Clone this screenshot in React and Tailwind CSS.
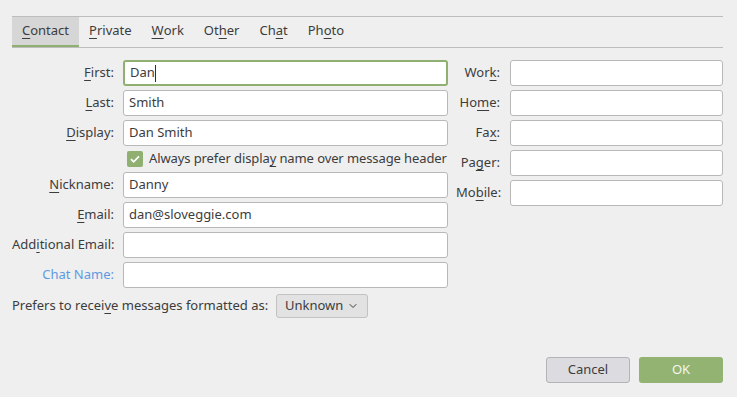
import { ChevronDown } from "lucide-react";

function Mn({ children }) {
  return <span className="underline decoration-1 underline-offset-[3px]">{children}</span>;
}

function Field({ value, focused }) {
  return (
    <div
      className={
        "h-[26px] rounded-[3px] bg-white flex items-center px-[5px] " +
        (focused ? "border-2 border-[#8fb070] px-[4px]" : "border border-[#b8b8b8]")
      }
    >
      <span>{value}</span>
      {focused && <span className="w-px h-[17px] bg-[#2e2e2e]" />}
    </div>
  );
}

const tabs = [
  ["C", "ontact"],
  ["P", "rivate"],
  ["W", "ork"],
  ["Ot", "h", "er"],
  ["Ch", "a", "t"],
  ["Ph", "o", "to"],
];

function Tab({ parts, active }) {
  const label =
    parts.length === 2 ? (
      <>
        <Mn>{parts[0]}</Mn>
        {parts[1]}
      </>
    ) : (
      <>
        {parts[0]}
        <Mn>{parts[1]}</Mn>
        {parts[2]}
      </>
    );
  return (
    <div
      className={
        "h-full px-[10px] flex items-center border-b-2 " +
        (active ? "bg-[#d6d6d6] border-[#8fb070]" : "border-transparent")
      }
    >
      {label}
    </div>
  );
}

export default function App() {
  return (
    <div
      className="w-[737px] h-[397px] bg-[#efefef] text-[#3c3c3c] text-[13px] pl-3 pr-[14px] pt-4 flex flex-col"
      style={{ fontFamily: '"Noto Sans", sans-serif' }}
    >
      <div className="border-t border-b border-[#bdbdbd] h-[32px] flex">
        {tabs.map((t, i) => (
          <Tab key={i} parts={t} active={i === 0} />
        ))}
      </div>

      <div className="flex mt-3">
        <div className="grid grid-cols-[102px_325px] gap-x-[9px] gap-y-[4px] items-center">
          <div className="text-right">
            <Mn>F</Mn>irst:
          </div>
          <Field value="Dan" focused />
          <div className="text-right">
            <Mn>L</Mn>ast:
          </div>
          <Field value="Smith" />
          <div className="text-right">
            <Mn>D</Mn>isplay:
          </div>
          <Field value="Dan Smith" />
          <div />
          <div className="h-[18px] flex items-center gap-[6px] pl-[4px] whitespace-nowrap tracking-[-0.1px]">
            <div className="w-4 h-4 shrink-0 rounded-[2px] bg-[#8fb070] flex items-center justify-center">
              <svg width="12" height="12" viewBox="0 0 12 12" fill="none">
                <path d="M2 6.2l2.6 2.6L10 3.4" stroke="white" strokeWidth="1.8" />
              </svg>
            </div>
            <span>
              Always prefer displa<Mn>y</Mn> name over message header
            </span>
          </div>
          <div className="text-right">
            <Mn>N</Mn>ickname:
          </div>
          <Field value="Danny" />
          <div className="text-right">
            <Mn>E</Mn>mail:
          </div>
          <Field value="dan@sloveggie.com" />
          <div className="text-right whitespace-nowrap">
            Add<Mn>i</Mn>tional Email:
          </div>
          <Field value="" />
          <div className="text-right text-[#5e9ae3]">Chat Name:</div>
          <Field value="" />
        </div>

        <div className="ml-[8px] grid grid-cols-[44px_213px] gap-x-[10px] gap-y-[4px] items-center content-start">
          <div className="text-right">
            Wor<Mn>k</Mn>:
          </div>
          <Field value="" />
          <div className="text-right">
            Ho<Mn>m</Mn>e:
          </div>
          <Field value="" />
          <div className="text-right">
            Fa<Mn>x</Mn>:
          </div>
          <Field value="" />
          <div className="text-right">
            Pa<Mn>g</Mn>er:
          </div>
          <Field value="" />
          <div className="text-right">
            Mo<Mn>b</Mn>ile:
          </div>
          <Field value="" />
        </div>
      </div>

      <div className="flex items-center mt-[6px] gap-[8px]">
        <span>
          Prefers to recei<Mn>v</Mn>e messages formatted as:
        </span>
        <div className="h-[24px] w-[92px] rounded-[3px] border border-[#c2c2c2] bg-[#e2e2e2] flex items-center justify-center gap-[4px]">
          <span>Unknown</span>
          <ChevronDown size={12} strokeWidth={2} />
        </div>
      </div>

      <div className="mt-auto mb-[14px] flex justify-end gap-[9px]">
        <div className="w-[84px] h-[26px] rounded-[3px] border border-[#b4b4b8] bg-[#dcdce0] flex items-center justify-center">
          Cancel
        </div>
        <div className="w-[84px] h-[26px] rounded-[3px] bg-[#92b372] text-[#f4f7f0] flex items-center justify-center">
          OK
        </div>
      </div>
    </div>
  );
}
